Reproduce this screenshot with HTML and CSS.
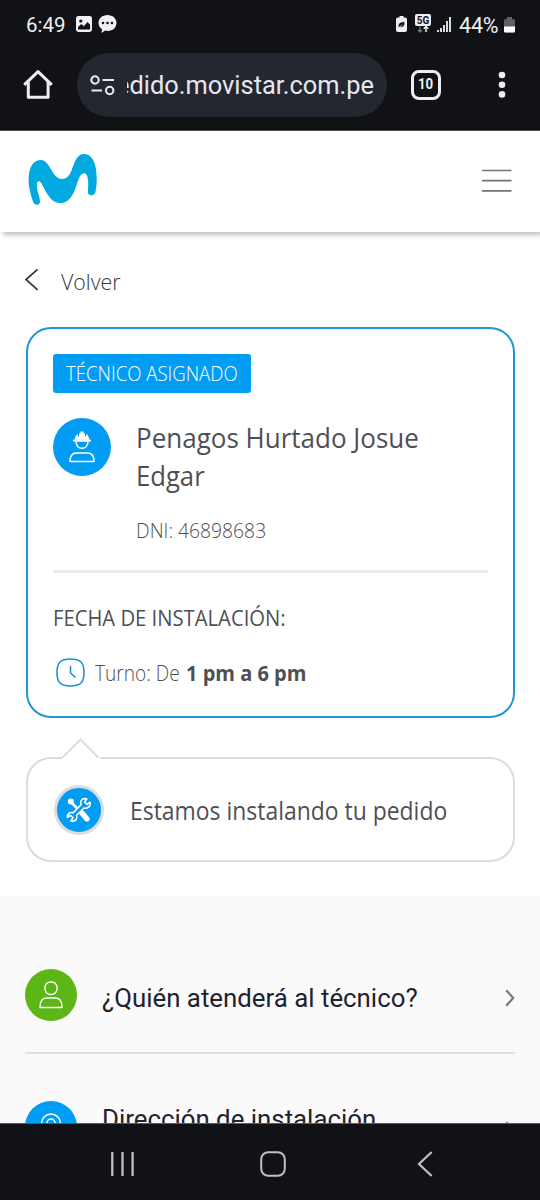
FILE: index.html
```html
<!DOCTYPE html>
<html lang="es">
<head>
<meta charset="utf-8">
<title>Movistar - Seguimiento de pedido</title>
<link rel="stylesheet" href="styles.css">
</head>
<body>
<div class="phone">
  <div class="system-top">
    <div class="status">
      <span class="clock">6:49</span>
      <svg class="status-left" width="42" height="20" viewBox="0 0 42 20">
        <rect x="0" y="1" width="16" height="16" rx="2.4" fill="#f0f0f2"/>
        <circle cx="4.8" cy="6" r="1.6" fill="#111216"/>
        <path d="M2 14.4V12l3.3-3 2.6 2.3 3.600-4.400 2.600 2.800v4.700z" fill="#111216"/>
        <path d="M31.500 0c5.200 0 9 3.600 9 8s-3.800 8-8.500 8c-1 0-1.900-.1-2.800-.4L25.500 18l.6-3.800C23.800 12.700 22.500 10.600 22.500 8c0-4.400 3.800-8 9-8z" fill="#f0f0f2"/>
        <g fill="#111216"><circle cx="27" cy="8" r="1.300"/><circle cx="31.500" cy="8" r="1.300"/><circle cx="36" cy="8" r="1.300"/></g>
      </svg>
      <svg class="status-right" width="56" height="20" viewBox="0 0 56 20">
        <path d="M3.500 1h4v1.500H9A2 2 0 0 1 11 4.500V15a2 2 0 0 1-2 2H2a2 2 0 0 1-2-2V4.500a2 2 0 0 1 2-2h1.500z" fill="#f0f0f2"/>
        <path d="M2.200 12.500c-.2-4.200 2-5.700 6.500-5.700.3 4.300-1.700 6-5 5.400L6.500 9.500" fill="#111216" stroke="#f0f0f2" stroke-width=".5"/>
        <rect x="19" y="-1" width="16" height="12" rx="2" fill="#f0f0f2"/>
        <text class="net" x="27" y="9" text-anchor="middle">5G</text>
        <path d="M24 11.500v5.500m-2-2 2 2 2-2" fill="none" stroke="#77787c" stroke-width="1.300"/>
        <path d="M30 17v-5.500m-2.300 2.300 2.300-2.300 2.300 2.300" fill="none" stroke="#f0f0f2" stroke-width="1.500"/>
        <path d="M42 17v-2m3 2v-4m3 4v-7m3 7V6m3 11V2" stroke="#f0f0f2" stroke-width="1.800"/>
      </svg>
      <span class="percent">44%</span>
      <svg width="11" height="16" viewBox="0 0 11 16">
        <path d="M3 0h5v2h1a2 2 0 0 1 2 2v10a1.500 1.500 0 0 1-1.500 1.500h-8A1.500 1.500 0 0 1 0 14V4a2 2 0 0 1 2-2h1z" fill="#606166"/>
        <path d="M0 9.500h11V14a1.500 1.500 0 0 1-1.500 1.500h-8A1.500 1.500 0 0 1 0 14z" fill="#fff"/>
      </svg>
    </div>
    <div class="browser">
      <svg class="home" width="30" height="32" viewBox="0 0 30 32" fill="none" stroke="#eeeef2" stroke-width="3" stroke-linejoin="round">
        <path d="M1.200 15.800 15 2.600l13.800 13.200"/><path d="M5.300 13v15.300h19.800V13"/>
      </svg>
      <div class="address">
        <svg width="25" height="21" viewBox="0 0 25 21" fill="none" stroke="#e8eaf0" stroke-width="2.100">
          <circle cx="5" cy="5" r="3.700"/><path d="M12.500 5H24M1.500 15.500H12"/><circle cx="19.700" cy="15.500" r="3.700"/>
        </svg>
        <div class="url-window"><span class="url">pedido.movistar.com.pe</span></div>
      </div>
      <div class="tabs"><span class="count">10</span></div>
      <svg class="more" width="8" height="28" viewBox="0 0 8 28" fill="#eeeef2"><circle cx="4" cy="4" r="3.300"/><circle cx="4" cy="13.700" r="3.300"/><circle cx="4" cy="23.400" r="3.300"/></svg>
    </div>
  </div>

  <header class="header">
    <svg class="brand" width="69" height="51" viewBox="0 0 69 51">
      <path class="logo" d="M13 6C17 6 19.500 9.500 22.500 14.500 26 20.500 29 25 34.300 25 39 25 41.500 21.500 43.700 16 46.500 8 49 0 56 0 65 0 68.700 11 68.700 24.500 68.700 31 68.300 34 67.500 37.700 67 39.800 65.500 41.200 63.300 41.200 61 41.200 59.800 39.800 59.900 37.500 60 34 60.500 30 60 26 59.500 21.500 58.500 19.300 56 19.300 53.500 19.300 52 21.500 50.300 26 47.500 33.500 46.500 39 42 44.300 39.500 47.500 36.500 49 32.700 49 28.500 49 25 47.500 22 43.700 18 39 15.500 33 13.500 29.500 12.600 27.800 11.800 27.200 10.800 27.200 9.300 27.200 8.700 29 8.900 32.500 9.200 37.500 11.500 42 12 46.700 12.200 49.200 11 50.800 9 50.800 6.500 50.800 5.500 49.200 4.700 46.700 2.300 40 .6 33 .6 26 .6 12.500 5.500 6 13 6z"/>
    </svg>
    <svg class="burger" width="30" height="24" viewBox="0 0 30 24"><path d="M0 1.500h29.500M0 11.700h29.500M0 21.800h29.500" stroke="#747478" stroke-width="1.700"/></svg>
  </header>

  <main class="content">
    <div class="back">
      <svg width="13" height="22" viewBox="0 0 13 22"><path d="M11.500.3 0 10.500l11.500 10.300" fill="none" stroke="#36373c" stroke-width="1.700"/></svg>
      <span class="fit volver">Volver</span>
    </div>

    <section class="card">
      <div class="badge"><span class="fit badge-text">TÉCNICO ASIGNADO</span></div>
      <div class="tech">
        <div class="avatar">
          <svg width="28" height="34" viewBox="0 0 28 34" fill="none" stroke="#fff" stroke-width="1.500">
            <path d="M8 12c.5 4.500 3 6.300 6 6.300s5.500-1.800 6-6.300"/>
            <path d="M6 10.600h16" stroke-width="2.200" stroke-linecap="round"/>
            <path d="M6.800 9.800C7 6.800 8 5 9.500 4l1.200 3.500L11.200 3.300h1.300V1.500h3v1.800h1.300l.5 4.200L18.500 4C20 5 21 6.800 21.200 9.800z" fill="#fff" stroke="none"/>
            <path d="M2 31.500c0-6 2.400-8.600 6.500-8.600h11c4.100 0 6.500 2.600 6.500 8.600z" stroke-linejoin="round"/>
          </svg>
        </div>
        <div class="who">
          <div class="name"><span class="fit name-1">Penagos Hurtado Josue</span><br><span class="fit name-2">Edgar</span></div>
          <div class="dni"><span class="fit dni-text">DNI: 46898683</span></div>
        </div>
      </div>
      <div class="rule"></div>
      <div class="date"><span class="fit date-text">FECHA DE INSTALACIÓN:</span></div>
      <div class="shift">
        <svg width="29" height="29" viewBox="0 0 29 29" fill="none" stroke="#1b93d8">
          <path d="M14.500 1C24.500 1 28 4.500 28 14.500S24.500 28 14.500 28 1 24.500 1 14.500 4.500 1 14.500 1z" stroke-width="1.600"/>
          <path d="M14.500 8.500V15l4.500 4" stroke-width="1.600" stroke-linecap="round" stroke-linejoin="round"/>
        </svg>
        <span class="shift-label"><span class="fit shift-text">Turno: De</span></span>
        <b class="fit shift-time">1 pm a 6 pm</b>
      </div>
    </section>

    <section class="notice">
      <svg class="pointer" width="38" height="21" viewBox="0 0 38 21"><path d="M0 20 19 1l19 19v1H0z" fill="#fff"/><path d="M.5 19.500 18.500 1.500l18 18" fill="none" stroke="#dcdcdc" stroke-width="2"/></svg>
      <div class="tools">
        <svg width="26" height="26" viewBox="0 0 26 26">
          <path d="M5 5 21.500 22" stroke="#fff" stroke-width="2.600"/>
          <circle cx="4.800" cy="4.500" r="3" fill="#fff"/>
          <path d="m16 16 5 6" stroke="#fff" stroke-width="5.400" stroke-linecap="round"/>
          <path d="M24 5.200 21.200 7.400 18.600 5.200 20.800 1.800C16.500.8 13.800 3.500 15 7.800L7.200 15.800C4 14.600.9 16.800 1.400 20.400L4.300 18.300 7 20.500 5 24C9 25.200 11.800 21.700 10.600 18.300L18 11C21.800 12 25.300 9 24 5.200z" fill="#019df4" stroke="#fff" stroke-width="1.600" stroke-linejoin="round"/>
        </svg>
      </div>
      <span class="fit notice-text">Estamos instalando tu pedido</span>
    </section>
  </main>

  <section class="details">
    <div class="row">
      <div class="dot green">
        <svg width="24" height="28" viewBox="0 0 24 28" fill="none" stroke="#fff" stroke-width="1.400"><rect x="6" y="1" width="12" height="12.500" rx="5.500"/><path d="M1 26.500c0-6 2-9.500 6.500-9.500h9c4.500 0 6.500 3.500 6.500 9.500z" stroke-linejoin="round"/></svg>
      </div>
      <span class="row-text"><span class="fit question">¿Quién atenderá al técnico?</span></span>
      <svg class="chev" width="10" height="18" viewBox="0 0 10 18"><path d="m1.200 1.200 7 7.800-7 7.800" fill="none" stroke="#77787a" stroke-width="2.200"/></svg>
    </div>
    <div class="row second">
      <div class="dot blue">
        <svg width="22" height="28" viewBox="0 0 22 28" fill="none" stroke="#fff" stroke-width="1.500"><path d="M11 27C6 21 1.500 16 1.500 10.500a9.500 9.500 0 0 1 19 0C20.500 16 16 21 11 27z"/><circle cx="11" cy="10" r="4"/></svg>
      </div>
      <span class="row-text"><span class="fit question">Dirección de instalación</span></span>
      <svg class="chev" width="10" height="18" viewBox="0 0 10 18"><path d="m1.200 1.200 7 7.800-7 7.800" fill="none" stroke="#77787a" stroke-width="2.200"/></svg>
    </div>
  </section>

  <nav class="nav">
    <svg width="24" height="26" viewBox="0 0 24 26"><path d="M2.300 1v24M12.500 1v24M22.600 1v24" stroke="#bfc0c2" stroke-width="2.300"/></svg>
    <svg class="nav-home" width="26" height="26" viewBox="0 0 26 26"><rect x="1.200" y="1.200" width="23.600" height="23.600" rx="7" fill="none" stroke="#bfc0c2" stroke-width="2"/></svg>
    <svg width="15" height="26" viewBox="0 0 15 26"><path d="M13.700 1 1 13l12.700 12" fill="none" stroke="#bfc0c2" stroke-width="2.200"/></svg>
  </nav>
</div>
</body>
</html>
```
FILE: styles.css
```css
* { box-sizing: border-box; }
body { margin: 0; background: #fff; font-family: "Open Sans", "Noto Sans", sans-serif; color: #4e4f55; }
svg { display: block; flex: none; overflow: visible; }
.phone { width: 540px; height: 1200px; overflow: hidden; display: flex; flex-direction: column; }
/* Condenses a text run from its left edge without reflowing it */
.fit { display: inline-block; white-space: nowrap; transform-origin: 0 50%; }

.system-top { height: 131px; flex: none; background: #111216; border-bottom: 1px solid #504d57; font-family: Roboto, sans-serif; color: #f0f0f2; }
.status { height: 50px; padding: 0 25px; display: flex; align-items: center; font-size: 20.5px; }
.clock { width: 51px; padding-left: 1px; }
.status-right { margin-left: auto; }
.percent { width: 42px; margin: 0 3px 0 7px; font-size: 21.500px; letter-spacing: -.2px; }
.net { font: 700 10px Roboto, sans-serif; fill: #111216; }
.browser { height: 70px; padding: 0 34px 0 23px; display: flex; align-items: center; }
.address { width: 310px; height: 64px; margin-left: 24px; padding-left: 13px; border-radius: 32px; background: #242730; display: flex; align-items: center; }
.url-window { width: 247px; margin-left: 12px; overflow: hidden; display: flex; justify-content: flex-end; }
.url { font-size: 25.4px; line-height: 34px; color: #e6e8f0; white-space: nowrap; }
.tabs { width: 30px; height: 30px; margin-left: 24px; border: 3px solid #eeeef2; border-radius: 8px; font-size: 15px; line-height: 23px; font-weight: 700; text-align: center; }
.count { display: inline-block; transform: scaleX(.88); }
.more { margin-left: auto; }

.header { height: 101px; flex: none; padding: 0 28px; display: flex; align-items: center; justify-content: space-between; background: #fff; box-shadow: 3px 3px 5px rgba(0, 0, 0, .25); }
.brand { margin-bottom: 4px; }
.burger { margin-bottom: 2px; }
.logo { fill: #00a9e0; }

.content { height: 664px; flex: none; padding: 29px 25px 0 26px; }
.back { height: 38px; display: flex; align-items: center; gap: 22px; }
.volver { padding-top: 2px; font-size: 22px; font-weight: 340; color: #36373c; transform: scaleX(.97); }

.card { height: 391px; margin-top: 28px; padding: 25px 25px 0; border: 2px solid #2196d3; border-radius: 25px; }
.badge { width: 198px; height: 39px; padding-left: 13px; border-radius: 3px; background: #019df4; color: #fff; font-size: 20px; font-weight: 300; line-height: 39px; }
.badge-text { transform: scaleX(.93); }
.tech { height: 178px; padding-top: 25px; display: flex; }
.avatar { width: 58px; height: 58px; flex: none; border-radius: 50%; background: #019df4; display: flex; align-items: center; justify-content: center; }
.who { margin-left: 25px; padding-top: 1px; }
.name { font-size: 27px; line-height: 38px; }
.name-1 { transform: scaleX(.963); }
.name-2 { transform: scaleX(.95); }
.dni { margin-top: 17px; font-size: 20px; line-height: 38px; font-weight: 340; }
.dni-text { transform: scaleX(.965); }
.rule { height: 3px; background: #ebebeb; border-radius: 1px; margin-top: -1px; }
.date { margin-top: 24px; font-size: 22px; line-height: 40px; }
.date-text { transform: scaleX(.92); }
.shift { height: 44px; margin-top: 13px; padding-left: 3px; display: flex; align-items: center; font-size: 22px; }
.shift-label { width: 91px; margin-left: 10px; font-weight: 340; }
.shift-text { transform: scaleX(.87); }
.shift-time { font-weight: 700; transform: scaleX(.91); }

.notice { position: relative; height: 105px; margin-top: 39px; padding-left: 26px; border: 2px solid #dcdcdc; border-radius: 25px; display: flex; align-items: center; }
.pointer { position: absolute; left: 34px; top: -21px; }
.tools { width: 50px; height: 50px; border: 3px solid #dcdcdc; border-radius: 50%; background: #019df4; display: flex; align-items: center; justify-content: center; }
.notice-text { margin-left: 26px; font-size: 25px; transform: scaleX(.917); }

.details { height: 227px; flex: none; padding: 52px 25px 0; overflow: hidden; background: #fafafa; font-family: Roboto, sans-serif; color: #22222f; font-size: 26px; }
.question { transform: scaleX(.993); }
.row { height: 106px; display: flex; padding-top: 21px; border-bottom: 2px solid #e0e0e0; }
.second { padding-top: 47px; border: 0; }
.dot { width: 52px; height: 52px; border-radius: 50%; display: flex; align-items: center; justify-content: center; }
.green { background: #5cb615; }
.blue { background: #019df4; }
.row-text { margin-left: 25px; line-height: 58px; }
.second .row-text { line-height: 36px; }
.chev { margin: 20px 0 0 auto; }

.nav { height: 77px; flex: none; padding: 3px 107px 0 110px; display: flex; align-items: center; justify-content: space-between; background: #111216; border-top: 1px solid #5a5b5f; }
.nav-home { margin-right: 6px; }
```
